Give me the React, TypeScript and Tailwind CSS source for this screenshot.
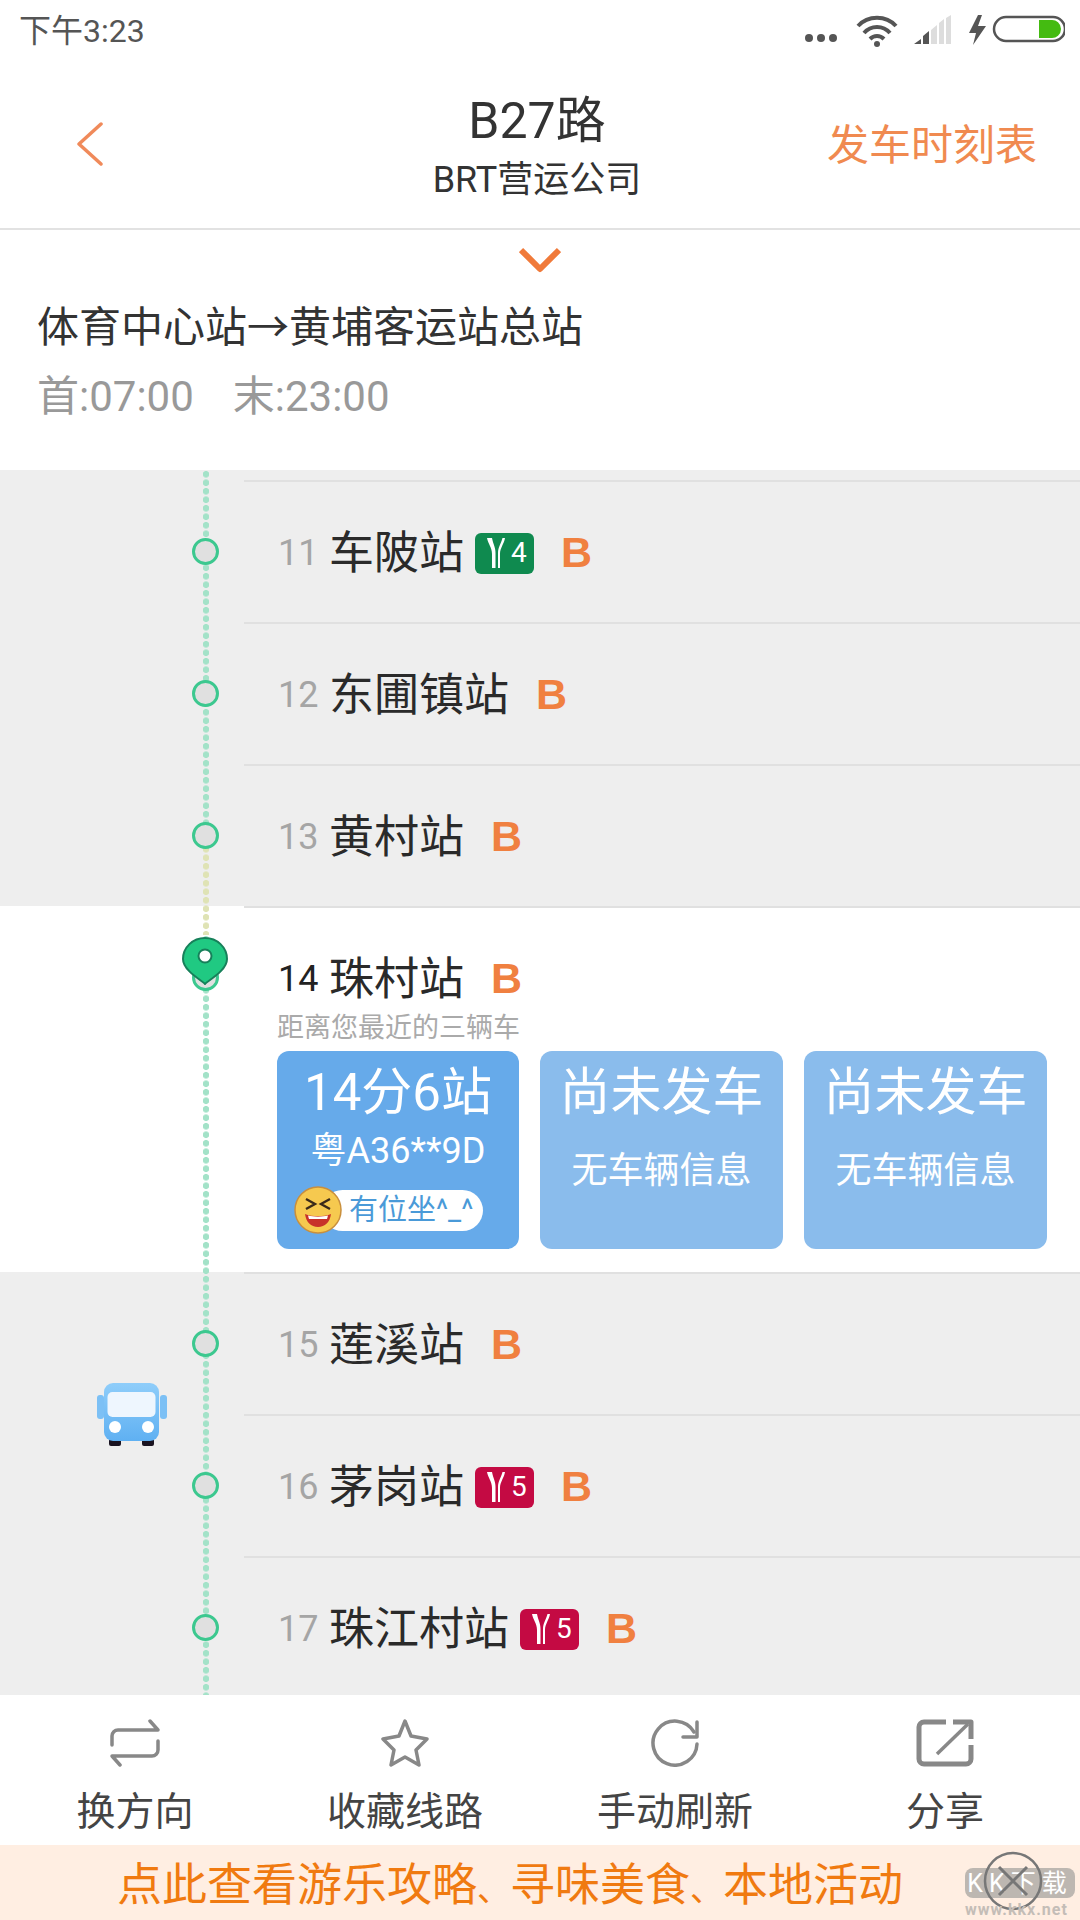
import React from "react";

type Stop = { no: number; name: string; line?: { n: number; color: string } };

const before: Stop[] = [
  { no: 11, name: "车陂站", line: { n: 4, color: "bg-[#0f8a4f]" } },
  { no: 12, name: "东圃镇站" },
  { no: 13, name: "黄村站" },
];

const after: Stop[] = [
  { no: 15, name: "莲溪站" },
  { no: 16, name: "茅岗站", line: { n: 5, color: "bg-[#c40a43]" } },
  { no: 17, name: "珠江村站", line: { n: 5, color: "bg-[#c40a43]" } },
];

function StatusIcons() {
  return (
    <svg width="260" height="34" viewBox="0 0 260 34" className="block">
      <circle cx="4" cy="23" r="4" fill="#555" />
      <circle cx="16" cy="23" r="4" fill="#555" />
      <circle cx="28" cy="23" r="4" fill="#555" />
      <g fill="none" stroke="#555" strokeWidth="4">
        <path d="M53 11 C63 0 81 0 91 11" />
        <path d="M59 18 C66 10 78 10 85 18" />
        <path d="M65 24 C69 20 75 20 79 24" />
      </g>
      <circle cx="72" cy="29" r="3" fill="#555" />
      <path d="M109 29 L116 24 V29 Z M118 29 V21 L124 16 V29 Z" fill="#555" />
      <path d="M126 29 V15 L132 10 V29 Z M134 29 V8 L139 4 V29 Z M141 29 V3 L146 0 V29 Z" fill="#ddd" />
      <path d="M173 0 L164 18 H171 L168 30 L181 11 H173 L177 0 Z" fill="#555" />
      <rect x="189" y="2" width="71" height="24" rx="12" fill="none" stroke="#555" strokeWidth="2.5" />
      <path d="M234 5 H246 A9 9 0 0 1 256 14 A9 9 0 0 1 246 23 H234 Z" fill="#44bb11" />
    </svg>
  );
}

function MetroBadge({ n, color }: { n: number; color: string }) {
  return (
    <span className={`flex h-[41px] w-[59px] shrink-0 items-center rounded-[6px] pl-[12px] ${color}`}>
      <svg width="18" height="30" viewBox="0 0 18 30" className="shrink-0">
        <path d="M0 0 H5 C6 6 8.5 9 8.5 15 V30 H5 V16 C5 9 1 6 0 0 Z" fill="#fff" />
        <path d="M18 0 H15.5 C14 6 11 9 11 15 V30 H13 V16 C13 10 17 6 18 0 Z" fill="#fff" />
      </svg>
      <span className="ml-[6px] text-[28px] leading-none text-white">{n}</span>
    </span>
  );
}

function StopTitle({ stop, active }: { stop: Stop; active?: boolean }) {
  return (
    <div className="flex h-[142px] items-center pl-[34px]">
      <span className={`w-[51px] shrink-0 text-[36px] leading-none ${active ? "text-[#222]" : "text-[#a5a5a5]"}`}>
        {stop.no}
      </span>
      <span className="text-[45px] leading-none text-[#2a2a2a]">{stop.name}</span>
      {stop.line ? (
        <span className="ml-[11px]">
          <MetroBadge n={stop.line.n} color={stop.line.color} />
        </span>
      ) : null}
      <span className="ml-[27px] pb-[2px] text-[43px] leading-none font-bold text-[#f08040] [font-family:'Liberation_Sans',sans-serif]">B</span>
    </div>
  );
}

function Node() {
  return (
    <span className="absolute top-[58px] left-[192px] z-20 h-[27px] w-[27px] rounded-full border-[3.5px] border-[#3cc88f] bg-[#e0e0e0]" />
  );
}

function StopRow({ stop }: { stop: Stop }) {
  return (
    <div className="relative flex h-[142px]">
      <div className="w-[244px] shrink-0" />
      <div className="flex-1 border-t-2 border-[#e0e0e0]">
        <StopTitle stop={stop} />
      </div>
      <Node />
    </div>
  );
}

function Laugh() {
  return (
    <svg width="48" height="48" viewBox="0 0 48 48" className="relative z-10 shrink-0">
      <circle cx="24" cy="24" r="23" fill="#f6c94f" stroke="#c98f3d" strokeWidth="1.5" />
      <path d="M12 13 L21 18 L12 23 M36 13 L27 18 L36 23" fill="none" stroke="#3a2a1a" strokeWidth="2.4" />
      <path d="M11 28 C18 31 30 31 37 28 C36 36 31 41 24 41 C17 41 12 36 11 28 Z" fill="#c8312a" />
      <path d="M14 29.5 C20 31 28 31 34 29.5 L33 33 H15 Z" fill="#fff" />
    </svg>
  );
}

function NearCard({ title, sub }: { title: string; sub: string }) {
  return (
    <div className="flex h-[198px] w-[243px] flex-col items-center rounded-[12px] bg-[#8abcec] pt-[16px] text-white">
      <div className="text-[51px] leading-[52px]">{title}</div>
      <div className="mt-[30px] text-[36px] leading-[44px]">{sub}</div>
    </div>
  );
}

function Bus() {
  return (
    <svg width="70" height="63" viewBox="0 0 70 63">
      <defs>
        <linearGradient id="busBody" x1="0" y1="0" x2="0" y2="1">
          <stop offset="0" stopColor="#8fcdfa" />
          <stop offset="1" stopColor="#5fb0f2" />
        </linearGradient>
      </defs>
      <rect x="0" y="12" width="7" height="24" rx="3" fill="#7cc0f5" />
      <rect x="63" y="12" width="7" height="24" rx="3" fill="#7cc0f5" />
      <rect x="12" y="55" width="12" height="8" rx="2" fill="#1a1320" />
      <rect x="45" y="55" width="12" height="8" rx="2" fill="#1a1320" />
      <rect x="7" y="0" width="55" height="58" rx="9" fill="url(#busBody)" />
      <rect x="10.5" y="9" width="48" height="25" rx="5" fill="#eef6fe" />
      <circle cx="18" cy="44" r="6" fill="#fff" />
      <circle cx="51" cy="44" r="6" fill="#fff" />
    </svg>
  );
}

function ActionIcon({ name }: { name: "swap" | "star" | "refresh" | "share" }) {
  if (name === "swap") {
    return (
      <svg width="52" height="48" viewBox="0 0 52 48" fill="none" stroke="#888" strokeWidth="3.5" strokeLinecap="round" strokeLinejoin="round">
        <path d="M3 26 V17 A6 6 0 0 1 9 11 H49 L41 2" />
        <path d="M49 22 V31 A6 6 0 0 1 43 37 H3 L11 46" />
      </svg>
    );
  }
  if (name === "star") {
    return (
      <svg width="50" height="48" viewBox="0 0 50 48" fill="none" stroke="#888" strokeWidth="3.5" strokeLinejoin="round">
        <path d="M25 2 L31 17 L47 20 L36 31 L39 46 L25 38 L11 46 L14 31 L3 20 L19 17 Z" />
      </svg>
    );
  }
  if (name === "refresh") {
    return (
      <svg width="50" height="48" viewBox="0 0 50 48" fill="none" stroke="#888" strokeWidth="3.5" strokeLinecap="round" strokeLinejoin="round">
        <path d="M44 13 A22 22 0 1 0 47 25" />
        <path d="M33 18 H47 V3" />
      </svg>
    );
  }
  return (
    <svg width="58" height="48" viewBox="0 0 58 48" fill="none" stroke="#888" strokeWidth="5" strokeLinejoin="round">
      <path d="M30 3 H8 A5 5 0 0 0 3 8 V40 A5 5 0 0 0 8 45 H50 A5 5 0 0 0 55 40 V26" />
      <path d="M21 35 L52 5" strokeWidth="3.5" />
      <path d="M37 3 H55 V20" />
    </svg>
  );
}

const actions = [
  { icon: "swap", label: "换方向" },
  { icon: "star", label: "收藏线路" },
  { icon: "refresh", label: "手动刷新" },
  { icon: "share", label: "分享" },
] as const;

export default function App() {
  return (
    <div
      lang="zh-CN"
      className="relative flex h-[1920px] w-[1080px] flex-col overflow-hidden bg-white [font-family:Roboto,'Noto_Sans_CJK_SC',sans-serif]"
    >
      {/* status bar */}
      <div className="flex h-[60px] shrink-0 items-start justify-between pr-[15px] pl-[19px]">
        <span className="mt-[12px] text-[32px] leading-[38px] text-[#555]">下午3:23</span>
        <div className="mt-[15px]">
          <StatusIcons />
        </div>
      </div>

      {/* header */}
      <div className="flex h-[170px] shrink-0 items-center border-b-2 border-[#e2e2e2]">
        <div className="w-[264px] shrink-0 pl-[76px]">
          <svg width="28" height="44" viewBox="0 0 28 44" fill="none" stroke="#f08a5a" strokeWidth="3.5" strokeLinecap="round" strokeLinejoin="round" className="block">
            <path d="M25 2 L3 22 L25 42" />
          </svg>
        </div>
        <div className="flex flex-1 flex-col items-center pt-[14px]">
          <div className="text-[50px] leading-[58px] text-[#333]">B27路</div>
          <div className="text-[36px] leading-[60px] text-[#333]">BRT营运公司</div>
        </div>
        <div className="w-[270px] shrink-0 pt-[4px] pr-[43px] text-right text-[42px] leading-none text-[#f08a50]">发车时刻表</div>
      </div>

      {/* line info */}
      <div className="flex h-[240px] shrink-0 flex-col">
        <div className="flex justify-center pt-[17px]">
          <svg width="42" height="26" viewBox="0 0 42 26" fill="none" stroke="#f07a3a" strokeWidth="6" strokeLinejoin="round" className="block">
            <path d="M2 3 L21 22 L40 3" />
          </svg>
        </div>
        <div className="mt-[30px] pl-[37px] text-[42px] leading-[50px] text-[#333]">体育中心站→黄埔客运站总站</div>
        <div className="mt-[19px] flex gap-[39px] pl-[37px] text-[42px] leading-[50px] text-[#999]">
          <span>首:07:00</span>
          <span>末:23:00</span>
        </div>
      </div>

      {/* stop list */}
      <div className="relative h-[1225px] shrink-0 overflow-hidden bg-[#eeeeee] pt-[10px]">
        <div className="absolute top-0 left-[201.5px] z-10 h-[375px] w-[8px] bg-[radial-gradient(circle,#a3e2c8_3px,transparent_3.5px)] bg-[length:8px_8.5px]" />
        <div className="absolute top-[375px] left-[201.5px] z-10 h-[90px] w-[8px] bg-[radial-gradient(circle,#dfe3b5_3px,transparent_3.5px)] bg-[length:8px_8.5px]" />
        <div className="absolute top-[465px] bottom-0 left-[201.5px] z-10 w-[8px] bg-[radial-gradient(circle,#a3e2c8_3px,transparent_3.5px)] bg-[length:8px_8.5px]" />

        {before.map((stop) => (
          <StopRow key={stop.no} stop={stop} />
        ))}

        <div className="relative flex h-[366px] bg-white">
          <div className="w-[244px] shrink-0" />
          <div className="flex-1 border-t-2 border-[#e0e0e0]">
            <StopTitle stop={{ no: 14, name: "珠村站" }} active />
            <div className="-mt-[40px] pl-[33px] text-[27px] leading-[36px] text-[#aaa]">距离您最近的三辆车</div>
            <div className="mt-[5px] flex gap-[21px] pl-[33px]">
              <div className="flex h-[198px] w-[242px] flex-col items-center rounded-[12px] bg-[#66aaea] pt-[16px] text-white">
                <div className="text-[51px] leading-[52px]">14分6站</div>
                <div className="mt-[10px] text-[36px] leading-[44px]">粤A36**9D</div>
                <div className="mt-[13px] flex items-center self-start pl-[17px]">
                  <Laugh />
                  <div className="-ml-[20px] flex h-[41px] w-[161px] items-center rounded-full bg-white pl-[27px] text-[29px] leading-none whitespace-nowrap text-[#4a9ad8]">
                    有位坐^_^
                  </div>
                </div>
              </div>
              <NearCard title="尚未发车" sub="无车辆信息" />
              <NearCard title="尚未发车" sub="无车辆信息" />
            </div>
          </div>
          <Node />
          {/* location pin */}
          <svg width="46" height="48" viewBox="0 0 46 48" className="absolute top-[31px] left-[182px] z-30">
            <path d="M23 47 C21 44 1 34 1 22 A22 21 0 0 1 45 22 C45 34 25 44 23 47 Z" fill="#20c982" stroke="#17805a" strokeWidth="2" />
            <circle cx="23" cy="19" r="6.5" fill="#fff" stroke="#17805a" strokeWidth="2" />
          </svg>
        </div>

        {after.map((stop) => (
          <StopRow key={stop.no} stop={stop} />
        ))}

        {/* bus marker */}
        <div className="absolute top-[913px] left-[97px] z-20">
          <Bus />
        </div>
      </div>

      {/* actions */}
      <div className="grid h-[150px] shrink-0 grid-cols-4">
        {actions.map((a) => (
          <div key={a.label} className="flex flex-col items-center pt-[24px]">
            <ActionIcon name={a.icon} />
            <div className="mt-[23px] text-[39px] leading-[44px] text-[#444]">{a.label}</div>
          </div>
        ))}
      </div>

      {/* banner */}
      <div className="flex h-[75px] shrink-0 items-center bg-[#ffeee2] pt-[5px] pl-[117px] text-[#f07a10]">
        <div className="flex items-baseline text-[45px] leading-none">
          <span>点此查看游乐攻略</span>
          <span className="text-[33px]">、</span>
          <span>寻味美食</span>
          <span className="text-[33px]">、</span>
          <span>本地活动</span>
        </div>
      </div>

      {/* watermark over the banner */}
      <div className="absolute top-[1851px] left-[965px] z-30 h-[69px] w-[115px]">
        <div className="absolute top-[17px] left-0 flex h-[30px] w-[110px] items-center justify-center rounded-[8px] bg-[#bdb7b1] text-[25px] leading-none tracking-[6px] text-white">
          KK下载
        </div>
        <svg width="60" height="60" viewBox="0 0 60 60" className="absolute top-0 left-[18px]">
          <circle cx="30" cy="30" r="28" fill="none" stroke="#777" strokeWidth="2.5" />
          <path d="M16 16 L44 44 M44 16 L16 44" stroke="#777" strokeWidth="3" />
        </svg>
        <div className="absolute top-[51px] left-0 text-[16px] leading-none font-bold tracking-[1px] text-[#c4bdb7]">www.kkx.net</div>
      </div>
    </div>
  );
}
